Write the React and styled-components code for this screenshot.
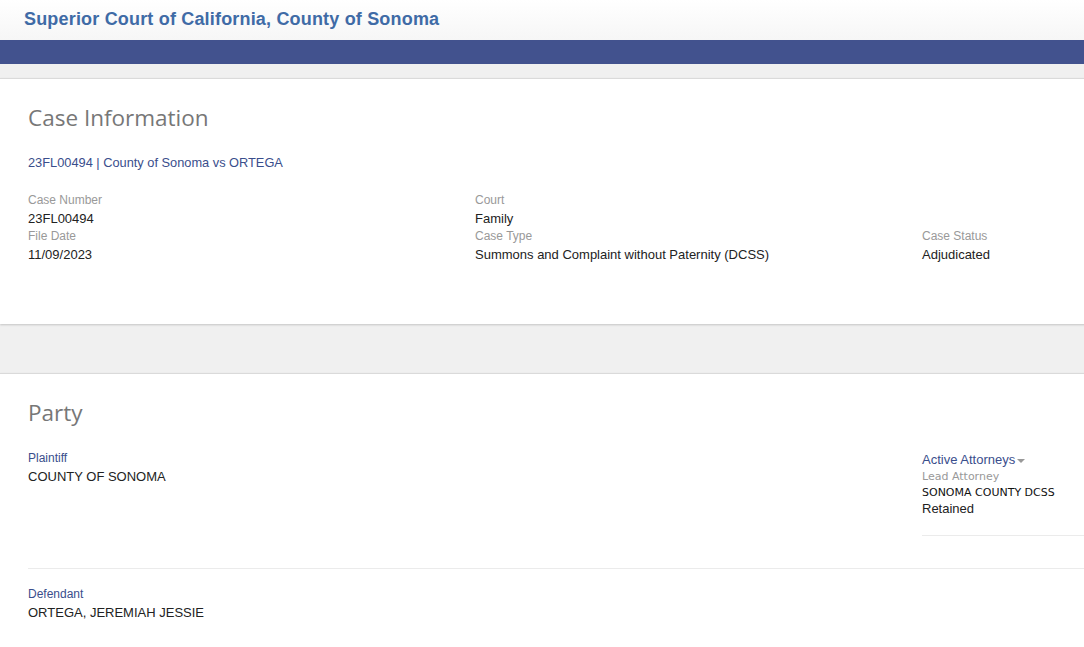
import React from "react";
import styled, { createGlobalStyle } from "styled-components";

const Global = createGlobalStyle`
  html, body { margin: 0; padding: 0; overflow-x: hidden; background: #f0f0f0; }
  body { font-family: "Liberation Sans", Arial, sans-serif; font-size: 13px; color: #222; }
`;

const Page = styled.div`
  width: 1400px;
  min-height: 647px;
  background: #f0f0f0;
`;

const Header = styled.header`
  height: 40px;
  box-sizing: border-box;
  padding-left: 24px;
  display: flex;
  align-items: center;
  background: linear-gradient(#ffffff, #f6f6f6);
`;

const SiteTitle = styled.h1`
  margin: 0;
  font-family: "Liberation Sans", Arial, sans-serif;
  font-size: 18px;
  letter-spacing: 0.18px;
  font-weight: bold;
  color: #3f6ba6;
  line-height: 22px;
  padding-bottom: 2px;
`;

const NavBar = styled.nav`
  height: 24px;
  background: #42528e;
`;

const Main = styled.main`
  padding-top: 14px;
  display: flex;
  flex-direction: column;
  gap: 49px;
`;

const Card = styled.section`
  background: #fff;
  border-top: 1px solid #dadada;
  box-shadow: 0 1px 2px rgba(0, 0, 0, 0.18);
  padding: 24px 28px ${(p) => p.$pb || 0}px;
`;

const CardTitle = styled.h2`
  margin: 0 0 ${(p) => p.$mb || 0}px;
  font-family: "Open Sans", "Segoe UI", sans-serif;
  font-weight: 400;
  font-size: 22.5px;
  line-height: 30px;
  color: #777;
`;

const CaseLink = styled.a`
  display: block;
  margin: 21px 0 21px;
  color: #3a4e8c;
  font-size: 12.8px;
  line-height: 17px;
  text-decoration: none;
`;

const Grid = styled.div`
  display: grid;
  grid-template-columns: repeat(3, 447px);
`;

const Field = styled.div`
  display: flex;
  flex-direction: column;
`;

const Label = styled.span`
  font-size: 12px;
  line-height: 17px;
  color: ${(p) => (p.$accent ? "#3a4e8c" : "#999")};
`;

const Value = styled.span`
  font-size: 13px;
  line-height: 19px;
  color: #222;
`;

const PartyRow = styled.div`
  display: grid;
  grid-template-columns: 894px 447px;
  padding: ${(p) => p.$pt}px 0 ${(p) => p.$pb}px;
  border-bottom: ${(p) => (p.$divider ? "1px solid #ebebeb" : "none")};
`;

const Attorneys = styled.div`
  margin-top: 1px;
  padding-bottom: 18px;
  border-bottom: 1px solid #ebebeb;
  display: flex;
  flex-direction: column;
`;

const AttorneyToggle = styled.span`
  display: inline-flex;
  align-items: center;
  font-size: 13px;
  line-height: 18px;
  color: #3a4e8c;
`;

const Caret = styled.span`
  width: 0;
  height: 0;
  margin-left: 2px;
  margin-top: 1px;
  border-left: 4px solid transparent;
  border-right: 4px solid transparent;
  border-top: 4px solid #999;
`;

const SmallLabel = styled.span`
  font-family: "DejaVu Sans", Verdana, sans-serif;
  font-size: 11px;
  line-height: 16px;
  color: #999;
`;

const SmallValue = styled.span`
  font-family: "DejaVu Sans", Verdana, sans-serif;
  font-size: 11px;
  line-height: 16px;
  color: #111;
`;

const Plain = styled.span`
  font-size: 13px;
  line-height: 16px;
  color: #222;
`;

const caseFields = [
  [
    { label: "Case Number", value: "23FL00494" },
    { label: "Court", value: "Family" },
    null,
  ],
  [
    { label: "File Date", value: "11/09/2023" },
    { label: "Case Type", value: "Summons and Complaint without Paternity (DCSS)" },
    { label: "Case Status", value: "Adjudicated" },
  ],
];

export default function App() {
  return (
    <Page>
      <Global />
      <Header>
        <SiteTitle>Superior Court of California, County of Sonoma</SiteTitle>
      </Header>
      <NavBar />
      <Main>
        <Card $pb={60}>
          <CardTitle>Case Information</CardTitle>
          <CaseLink href="#">23FL00494 | County of Sonoma vs ORTEGA</CaseLink>
          {caseFields.map((row, i) => (
            <Grid key={i}>
              {row.map((f, j) =>
                f ? (
                  <Field key={j}>
                    <Label>{f.label}</Label>
                    <Value>{f.value}</Value>
                  </Field>
                ) : (
                  <div key={j} />
                )
              )}
            </Grid>
          ))}
        </Card>
        <Card $pb={40}>
          <CardTitle $mb={6}>Party</CardTitle>
          <PartyRow $pt={16} $pb={32} $divider>
            <Field>
              <Label $accent>Plaintiff</Label>
              <Value>COUNTY OF SONOMA</Value>
            </Field>
            <Attorneys>
              <AttorneyToggle>
                Active Attorneys
                <Caret />
              </AttorneyToggle>
              <SmallLabel>Lead Attorney</SmallLabel>
              <SmallValue>SONOMA COUNTY DCSS</SmallValue>
              <Plain>Retained</Plain>
            </Attorneys>
          </PartyRow>
          <PartyRow $pt={17} $pb={16}>
            <Field>
              <Label $accent>Defendant</Label>
              <Value>ORTEGA, JEREMIAH JESSIE</Value>
            </Field>
          </PartyRow>
        </Card>
      </Main>
    </Page>
  );
}
